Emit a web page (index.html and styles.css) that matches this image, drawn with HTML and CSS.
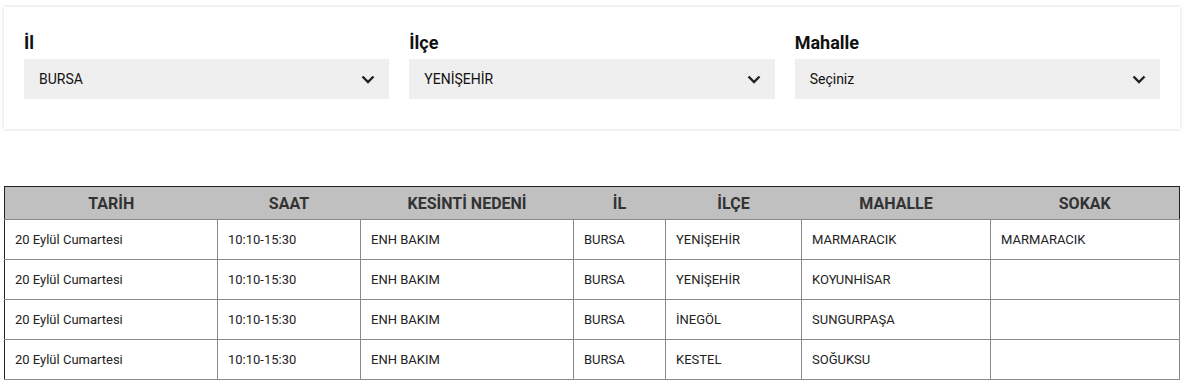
FILE: index.html
```html
<!DOCTYPE html>
<html lang="tr">
<head>
<meta charset="utf-8">
<link rel="stylesheet" href="styles.css">
</head>
<body>
<div class="page">
  <div class="filter-card">
    <div class="field">
      <div class="label">İl</div>
      <div class="select"><span>BURSA</span><svg class="chev" width="14" height="9" viewBox="0 0 14 9"><path d="M1.5 1.5 L7 7 L12.5 1.5" fill="none" stroke="#222" stroke-width="2.4"/></svg></div>
    </div>
    <div class="field">
      <div class="label">İlçe</div>
      <div class="select"><span>YENİŞEHİR</span><svg class="chev" width="14" height="9" viewBox="0 0 14 9"><path d="M1.5 1.5 L7 7 L12.5 1.5" fill="none" stroke="#222" stroke-width="2.4"/></svg></div>
    </div>
    <div class="field">
      <div class="label">Mahalle</div>
      <div class="select"><span>Seçiniz</span><svg class="chev" width="14" height="9" viewBox="0 0 14 9"><path d="M1.5 1.5 L7 7 L12.5 1.5" fill="none" stroke="#222" stroke-width="2.4"/></svg></div>
    </div>
  </div>

  <table class="outages">
    <colgroup>
      <col style="width:213px"><col style="width:143px"><col style="width:213px"><col style="width:92px"><col style="width:136px"><col style="width:189px"><col>
    </colgroup>
    <thead>
      <tr><th>TARİH</th><th>SAAT</th><th>KESİNTİ NEDENİ</th><th>İL</th><th>İLÇE</th><th>MAHALLE</th><th>SOKAK</th></tr>
    </thead>
    <tbody>
      <tr><td>20 Eylül Cumartesi</td><td>10:10-15:30</td><td>ENH BAKIM</td><td>BURSA</td><td>YENİŞEHİR</td><td>MARMARACIK</td><td>MARMARACIK</td></tr>
      <tr><td>20 Eylül Cumartesi</td><td>10:10-15:30</td><td>ENH BAKIM</td><td>BURSA</td><td>YENİŞEHİR</td><td>KOYUNHİSAR</td><td></td></tr>
      <tr><td>20 Eylül Cumartesi</td><td>10:10-15:30</td><td>ENH BAKIM</td><td>BURSA</td><td>İNEGÖL</td><td>SUNGURPAŞA</td><td></td></tr>
      <tr><td>20 Eylül Cumartesi</td><td>10:10-15:30</td><td>ENH BAKIM</td><td>BURSA</td><td>KESTEL</td><td>SOĞUKSU</td><td></td></tr>
    </tbody>
  </table>
</div>
</body>
</html>
```
FILE: styles.css
```css
html, body {
  margin: 0;
  padding: 0;
  background: #fff;
  font-family: Roboto, "Liberation Sans", Arial, sans-serif;
  color: #222;
}
.page {
  padding: 7px 4px 0 4px;
}
.filter-card {
  display: flex;
  gap: 20px;
  padding: 25px 20px 30px 20px;
  background: #fff;
  box-shadow: 0 0 4px rgba(0, 0, 0, 0.16);
}
.field {
  flex: 1;
  display: flex;
  flex-direction: column;
}
.label {
  font-size: 18px;
  font-weight: 700;
  color: #111;
  line-height: 22px;
  margin-bottom: 5px;
}
.select {
  height: 40px;
  background: #efefef;
  display: flex;
  align-items: center;
  justify-content: space-between;
  padding: 0 14px 0 15px;
  font-size: 14px;
  color: #111;
}
.chev {
  display: block;
}
.outages {
  margin-top: 57px;
  width: 100%;
  border-collapse: collapse;
  table-layout: fixed;
  border-left: 1px solid #222;
}
.outages th {
  background: #c0c0c0;
  height: 32px;
  font-size: 16px;
  font-weight: 700;
  color: #333;
  text-align: center;
  border-top: 1px solid #222;
  border-bottom: 1px solid #888;
  padding: 0;
}
.outages th:first-child {
  border-left: 1px solid #222;
}
.outages th:last-child {
  border-right: 1px solid #222;
}
.outages td {
  height: 39px;
  padding: 0 0 0 10px;
  font-size: 13px;
  color: #222;
  border: 1px solid #8a8a8a;
  white-space: nowrap;
}
.outages td:first-child {
  border-left: 1px solid #222;
}
```
